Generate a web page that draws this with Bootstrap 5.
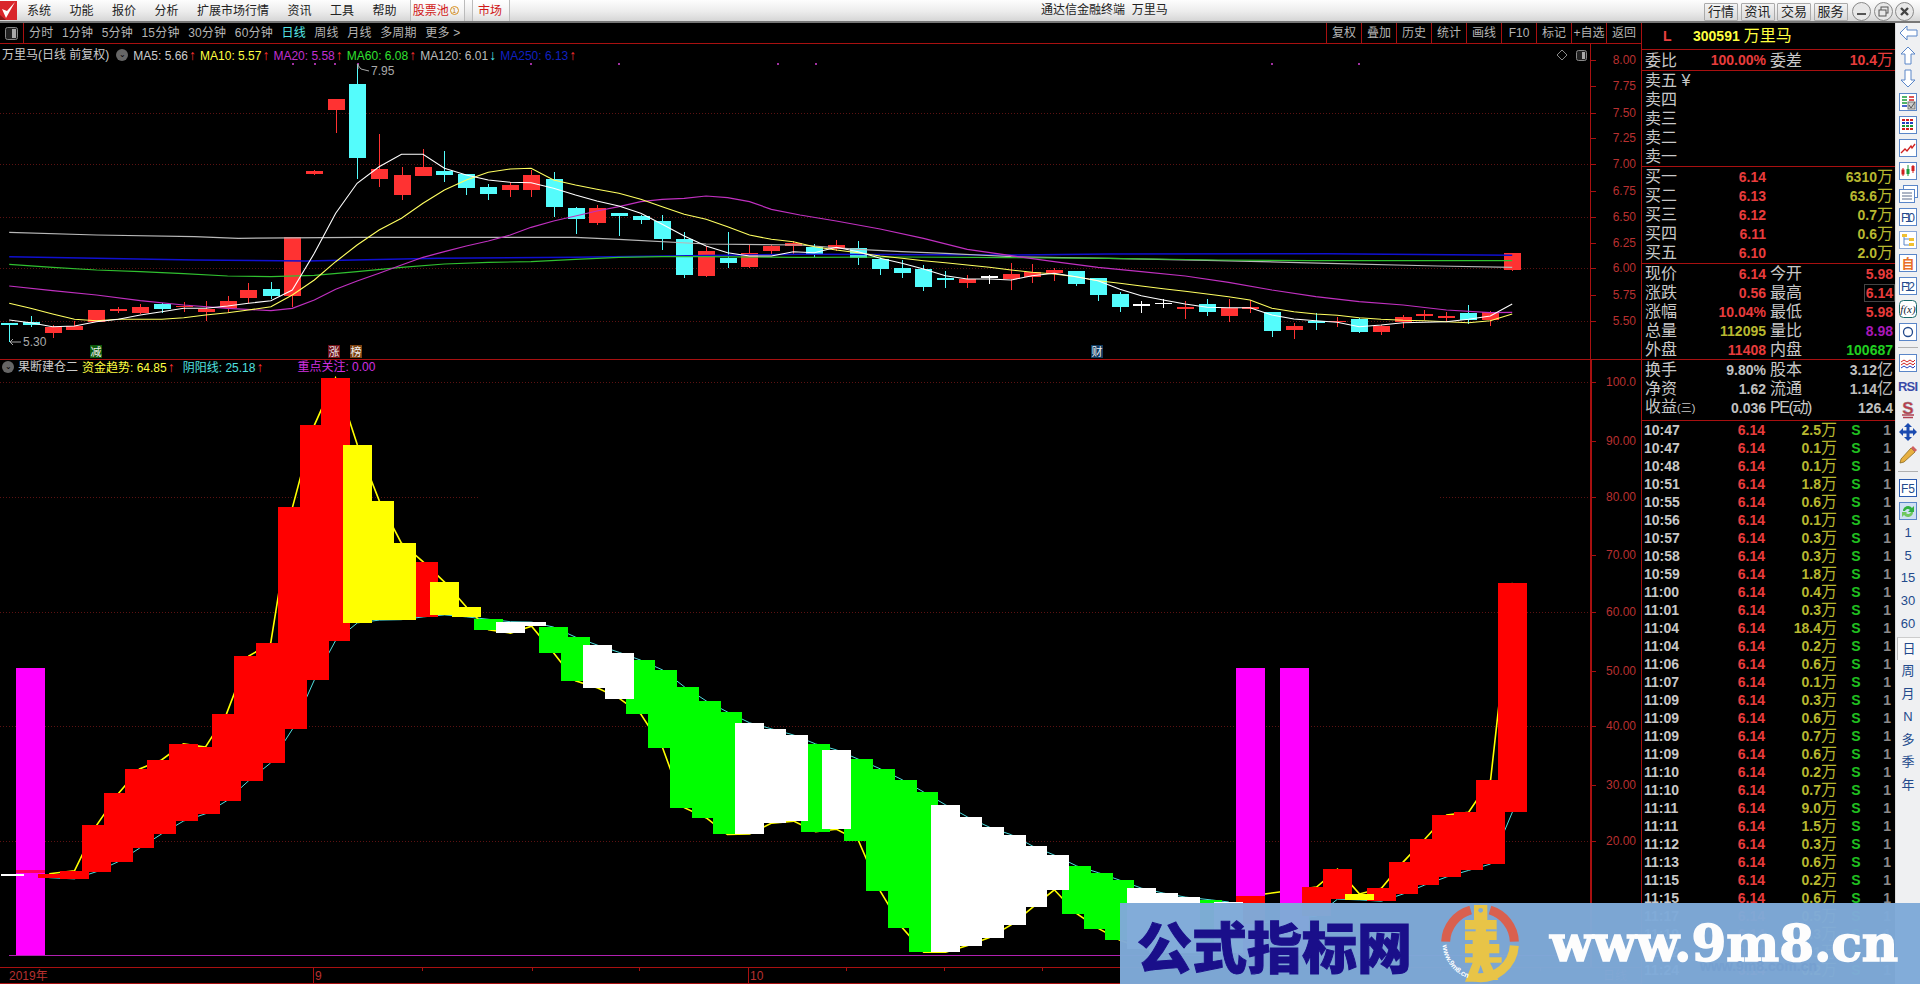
<!DOCTYPE html>
<html lang="zh-CN">
<head>
    <meta charset="UTF-8">
    <title>通达信金融终端 万里马</title>
    <link href="https://cdn.jsdelivr.net/npm/bootstrap@5.3.3/dist/css/bootstrap.min.css" rel="stylesheet">
    <script src="https://cdn.jsdelivr.net/npm/bootstrap@5.3.3/dist/js/bootstrap.bundle.min.js"></script>
    <style>
        body { width: 1920px; height: 984px; overflow: hidden; background: #000; color: #ccc;
               font-family: "Liberation Sans", "Noto Sans CJK SC", sans-serif; font-size: 12px; line-height: 1; }
        /* title bar */
        .topbar { height: 23px; background: linear-gradient(#fdfdfd, #ececec 55%, #d6d6d6); border-bottom: 2px solid #777; color: #222; position: relative; }
        .logo-box { width: 17px; height: 19px; }
        .menu-list { padding-left: 10px; gap: 18.5px; }
        .tab-red { height: 21px; color: #d01818; border-left: 1px solid #bbb; border-right: 1px solid #bbb; padding: 0 3px 0 2px; background: linear-gradient(#fff, #f2f2f2 60%, #ddd); }
        .tab-a { margin-left: 13px; width: 55px; gap: 1px; }
        .tab-b { margin-left: 7px; width: 38px; justify-content: center; }
        .dot-one { width: 9px; height: 9px; border: 1px solid #d89020; border-radius: 50%; color: #c07810; font-size: 7px; line-height: 7px; text-align: center; }
        .app-title { position: absolute; left: 1041px; top: 4px; width: 130px; white-space: nowrap; }
        .top-btns { position: absolute; right: 6px; top: 2px; gap: 2.5px; }
        .top-btn { width: 34px; height: 18px; padding: 0; font-size: 13px; line-height: 16px; border: 1px solid #aaa; border-radius: 1px; background: linear-gradient(#f4f4f4, #d8d8d8); color: #222; }
        .win-btn { width: 19px; height: 19px; }
        .win-btn:first-of-type { margin-left: 2px; }
        /* layout */
        .main-row { height: 961px; }
        .chart-col { width: 1642px; border-right: 1px solid #a81010; }
        .tool-row { height: 21px; border-bottom: 1px solid #a81010; color: #b4b4b4; }
        .tool-ico { width: 24px; height: 20px; border-right: 1px solid #a81010; }
        .tool-left { padding-left: 5px; gap: 8.5px; letter-spacing: .2px; }
        .tool-on { color: #55e8e8; }
        .tool-right { margin-left: auto; }
        .tool-right span { width: 35px; height: 20px; line-height: 20px; text-align: center; border-left: 1px solid #a81010; }
        .pane { position: relative; overflow: hidden; }
        .pane-top { height: 316px; }
        .pane-sub { height: 607px; }
        .pane-time { height: 17px; }
        .plot { position: absolute; left: 0; top: 0; }
        .legend { position: relative; z-index: 1; white-space: nowrap; font-size: 12px; }
        .legend-top { height: 22px; padding-left: 2px; }
        .legend-sub { height: 14px; padding-left: 2px; }
        .knob { width: 12px; height: 12px; border-radius: 50%; background: #666; color: #000; font-size: 8px; line-height: 11px; text-align: center; margin: 0 5px 0 7px; }
        .knob-s { margin: 0 4px 0 0; }
        .ma { margin-right: 4px; }
        .up { color: #ff3030; font-weight: 400; margin-left: 1px; font-size: 14px; line-height: 12px; width: 7px; display: inline-block; text-align: center; }
        .dn { color: #54e8f0; }
        /* quote panel */
        .pnl { width: 253px; font-family: "Liberation Sans", "Noto Sans CJK SC", sans-serif; overflow: hidden; }
        .pnl-hd { height: 27px; border-bottom: 1px solid #a81010; color: #ffff40; }
        .pnl-l { width: 51px; padding-left: 21px; color: #e84040; font-size: 14px; font-weight: 700; }
        .pnl-sec { border-bottom: 1px solid #a81010; }
        .sec-buy { padding-bottom: 1px; }
        .sec-base { padding-bottom: 3px; }
        .pnl-row { display: flex; height: 19px; align-items: center; padding-left: 3px; }
        .row-t { height: 20px; }
        .half { display: flex; justify-content: space-between; align-items: center; white-space: nowrap; }
        .half-a { width: 121px; }
        .half-b { width: 123px; margin-left: 4px; }
        .lb { font-size: 16px; line-height: 19px; color: #c8c8c8; }
        .lb-sm { font-size: 11px; }
        .lb-tight { letter-spacing: -1.4px; }
        .num { font-size: 14px; font-weight: 700; }
        .unit { font-size: 16px; font-weight: 400; }
        .c-red { color: #e83c3c; }
        .c-yel { color: #b8b830; }
        .c-gry { color: #c0c0c0; }
        .c-grn { color: #20d020; }
        .c-pur { color: #a818b8; }
        .hi-box { outline: 1px solid #444; outline-offset: 1px; }
        .tick-row { display: flex; height: 18px; align-items: center; padding-left: 2px; }
        .t-time { width: 50px; color: #c8c8c8; }
        .t-price { width: 71px; text-align: right; color: #e83c3c; }
        .t-vol { width: 72px; text-align: right; color: #b8b830; }
        .t-s { width: 38px; text-align: center; color: #20c020; }
        .t-n { width: 16px; text-align: right; color: #8c8c8c; }
        /* side bar */
        .side { width: 25px; background: #eff0f2; border-left: 1px solid #ddd; color: #234a8c; }
        .side-item { height: 23px; flex-shrink: 0; display: flex; align-items: center; justify-content: center; font-size: 13px; }
        .side-txt { height: 22.75px; }
        .side-first { margin-top: -2px; }
        .side-lift { margin-top: -1px; }
        .side-sep { height: 1px; background: #b0b0b0; margin: 4px 2px 3px; flex-shrink: 0; }
        .side-sep-b { margin: 5px 2px 4px; }
        .side-sel { background: #fafafa; border-left: 1px solid #bbb; border-top: 1px solid #ccc; margin: 2px 0 0 1px; }
        /* overlay banner */
        .banner { position: absolute; left: 1120px; top: 903px; right: 0; bottom: 0; background: rgba(127, 170, 216, .975); overflow: hidden; }
        .banner-name { font-family: "Noto Sans CJK SC", sans-serif; font-weight: 900; font-size: 55px; line-height: 70px; color: #1a0f8a; margin-left: 17px; -webkit-text-stroke: 1px #1a0f8a; white-space: nowrap; }
        .banner-url { font-family: "DejaVu Serif", serif; font-weight: 700; font-size: 50px; line-height: 62px; color: #fdfdfd; margin-left: 20px; -webkit-text-stroke: 1.5px #fdfdfd; white-space: nowrap; }
        .banner-ghost { position: absolute; left: 580px; top: 56px; font-size: 14px; font-weight: 700; color: #76a0d0; white-space: nowrap; }
    </style>
</head>
<body>
    <!-- 标题栏 -->
    <div class="topbar d-flex align-items-center">
        <svg class="logo-box flex-shrink-0" viewBox="0 0 17 19"><rect width="17" height="19" fill="#d9262b"/><path d="M2 8 L6 17 L15 1 L7 10 Z" fill="#fff"/><path d="M0 14 L6 19 L0 19 Z" fill="#8c1a1a"/></svg>
        <div class="menu-list d-flex align-items-center"><span>系统</span><span>功能</span><span>报价</span><span>分析</span><span>扩展市场行情</span><span>资讯</span><span>工具</span><span>帮助</span></div>
        <div class="tab-red tab-a d-flex align-items-center"><span>股票池</span><i class="dot-one fst-normal">1</i></div>
        <div class="tab-red tab-b d-flex align-items-center"><span>市场</span></div>
        <div class="app-title">通达信金融终端&nbsp; 万里马</div>
        <div class="top-btns d-flex align-items-center">
            <button class="btn top-btn" type="button">行情</button>
            <button class="btn top-btn" type="button">资讯</button>
            <button class="btn top-btn" type="button">交易</button>
            <button class="btn top-btn" type="button">服务</button>
            <svg class="win-btn" viewBox="0 0 19 19"><circle cx="9.5" cy="9.5" r="9" fill="#e8e8e8" stroke="#888"/><rect x="5" y="11" width="9" height="2" fill="#555"/></svg>
            <svg class="win-btn" viewBox="0 0 19 19"><circle cx="9.5" cy="9.5" r="9" fill="#e8e8e8" stroke="#888"/><rect x="7" y="5" width="7" height="6" fill="none" stroke="#555"/><rect x="5" y="8" width="7" height="6" fill="#e8e8e8" stroke="#555"/></svg>
            <svg class="win-btn" viewBox="0 0 19 19"><circle cx="9.5" cy="9.5" r="9" fill="#e8e8e8" stroke="#888"/><path d="M6 6 L13 13 M13 6 L6 13" stroke="#444" stroke-width="2.4"/></svg>
        </div>
    </div>

    <div class="main-row d-flex">
        <!-- 图表区 -->
        <div class="chart-col flex-shrink-0">
            <div class="tool-row d-flex align-items-center">
                <div class="tool-ico d-flex align-items-center justify-content-center flex-shrink-0">
                    <svg width="13" height="13" viewBox="0 0 13 13"><rect x=".5" y=".5" width="12" height="12" rx="2" fill="#222" stroke="#888"/><rect x="7" y="2" width="4" height="9" fill="#aaa"/></svg>
                </div>
                <div class="tool-left d-flex align-items-center">
                    <span>分时</span><span>1分钟</span><span>5分钟</span><span>15分钟</span><span>30分钟</span><span>60分钟</span><span class="tool-on">日线</span><span>周线</span><span>月线</span><span>多周期</span><span>更多 &gt;</span>
                </div>
                <div class="tool-right d-flex">
                    <span>复权</span><span>叠加</span><span>历史</span><span>统计</span><span>画线</span><span>F10</span><span>标记</span><span>+自选</span><span>返回</span>
                </div>
            </div>

            <div class="pane pane-top">
                <svg class="plot" id="plotTop" width="1641" height="316" viewBox="0 44 1641 316"></svg>
                <div class="legend legend-top d-flex align-items-center">
                    <span>万里马(日线 前复权)</span><span class="knob">&#8964;</span>
                    <span class="ma">MA5: 5.66<b class="up">↑</b></span>
                    <span class="ma" style="color:#ffff40">MA10: 5.57<b class="up">↑</b></span>
                    <span class="ma" style="color:#c030d0">MA20: 5.58<b class="up">↑</b></span>
                    <span class="ma" style="color:#30e030">MA60: 6.08<b class="up">↑</b></span>
                    <span class="ma" style="color:#bbb">MA120: 6.01<b class="up dn">↓</b></span>
                    <span class="ma" style="color:#1020c0">MA250: 6.13<b class="up">↑</b></span>
                </div>
            </div>

            <div class="pane pane-sub">
                <svg class="plot" id="plotSub" width="1641" height="607" viewBox="0 360 1641 607"></svg>
                <div class="legend legend-sub d-flex align-items-center">
                    <span class="knob knob-s">&#8964;</span><span class="me-1">果断建仓二</span>
                    <span style="color:#ffff40">资金趋势: 64.85<b class="up">↑</b></span>
                    <span class="ms-2" style="color:#50e0e0">阴阳线: 25.18<b class="up">↑</b></span>
                    <span style="color:#d030e0;margin-left:34px">重点关注: 0.00</span>
                </div>
            </div>

            <div class="pane pane-time">
                <svg class="plot" id="plotTime" width="1641" height="17" viewBox="0 967 1641 17"></svg>
            </div>
        </div>

        <!-- 报价面板 -->
        <div class="pnl flex-shrink-0">
            <div class="pnl-hd d-flex align-items-center">
                <span class="pnl-l">L</span><span class="num">300591</span><span class="unit ms-1">万里马</span>
            </div>
            <div class="pnl-sec">
                <div class="pnl-row row-t">
                    <div class="half half-a"><span class="lb">委比</span><span class="num c-red">100.00%</span></div>
                    <div class="half half-b"><span class="lb">委差</span><span class="num c-red">10.4<span class="unit">万</span></span></div>
                </div>
            </div>
            <div class="pnl-sec">
                <div class="pnl-row"><span class="lb">卖五 ¥</span></div>
                <div class="pnl-row"><span class="lb">卖四</span></div>
                <div class="pnl-row"><span class="lb">卖三</span></div>
                <div class="pnl-row"><span class="lb">卖二</span></div>
                <div class="pnl-row"><span class="lb">卖一</span></div>
            </div>
            <div class="pnl-sec sec-buy">
                <div class="pnl-row"><div class="half half-a"><span class="lb">买一</span><span class="num c-red">6.14</span></div><div class="half half-b justify-content-end"><span class="num c-yel">6310<span class="unit">万</span></span></div></div>
                <div class="pnl-row"><div class="half half-a"><span class="lb">买二</span><span class="num c-red">6.13</span></div><div class="half half-b justify-content-end"><span class="num c-yel">63.6<span class="unit">万</span></span></div></div>
                <div class="pnl-row"><div class="half half-a"><span class="lb">买三</span><span class="num c-red">6.12</span></div><div class="half half-b justify-content-end"><span class="num c-yel">0.7<span class="unit">万</span></span></div></div>
                <div class="pnl-row"><div class="half half-a"><span class="lb">买四</span><span class="num c-red">6.11</span></div><div class="half half-b justify-content-end"><span class="num c-yel">0.6<span class="unit">万</span></span></div></div>
                <div class="pnl-row"><div class="half half-a"><span class="lb">买五</span><span class="num c-red">6.10</span></div><div class="half half-b justify-content-end"><span class="num c-yel">2.0<span class="unit">万</span></span></div></div>
            </div>
            <div class="pnl-sec">
                <div class="pnl-row"><div class="half half-a"><span class="lb">现价</span><span class="num c-red">6.14</span></div><div class="half half-b"><span class="lb">今开</span><span class="num c-red">5.98</span></div></div>
                <div class="pnl-row"><div class="half half-a"><span class="lb">涨跌</span><span class="num c-red">0.56</span></div><div class="half half-b"><span class="lb">最高</span><span class="num c-red hi-box">6.14</span></div></div>
                <div class="pnl-row"><div class="half half-a"><span class="lb">涨幅</span><span class="num c-red">10.04%</span></div><div class="half half-b"><span class="lb">最低</span><span class="num c-red">5.98</span></div></div>
                <div class="pnl-row"><div class="half half-a"><span class="lb">总量</span><span class="num c-yel">112095</span></div><div class="half half-b"><span class="lb">量比</span><span class="num c-pur">8.98</span></div></div>
                <div class="pnl-row"><div class="half half-a"><span class="lb">外盘</span><span class="num c-red">11408</span></div><div class="half half-b"><span class="lb">内盘</span><span class="num c-grn">100687</span></div></div>
            </div>
            <div class="pnl-sec sec-base">
                <div class="pnl-row"><div class="half half-a"><span class="lb">换手</span><span class="num c-gry">9.80%</span></div><div class="half half-b"><span class="lb">股本</span><span class="num c-gry">3.12<span class="unit">亿</span></span></div></div>
                <div class="pnl-row"><div class="half half-a"><span class="lb">净资</span><span class="num c-gry">1.62</span></div><div class="half half-b"><span class="lb">流通</span><span class="num c-gry">1.14<span class="unit">亿</span></span></div></div>
                <div class="pnl-row"><div class="half half-a"><span class="lb">收益<span class="lb-sm">(三)</span></span><span class="num c-gry">0.036</span></div><div class="half half-b"><span class="lb lb-tight">PE(动)</span><span class="num c-gry">126.4</span></div></div>
            </div>
            <div id="ticks"></div>
        </div>

        <!-- 右侧工具条 -->
        <div class="side d-flex flex-column flex-shrink-0">
            <div class="side-item side-first"><svg width="19" height="16" viewBox="0 0 19 16"><path d="M1 8 L8 1 V5 H18 V11 H8 V15 Z" fill="#fff" stroke="#5a86c8"/></svg></div>
            <div class="side-item"><svg width="16" height="19" viewBox="0 0 16 19"><path d="M8 1 L15 8 H11 V18 H5 V8 H1 Z" fill="#fff" stroke="#5a86c8"/></svg></div>
            <div class="side-item"><svg width="16" height="19" viewBox="0 0 16 19"><path d="M8 18 L15 11 H11 V1 H5 V11 H1 Z" fill="#fff" stroke="#5a86c8"/></svg></div>
            <div class="side-item"><svg width="18" height="18" viewBox="0 0 18 18"><rect x=".5" y=".5" width="17" height="17" fill="#fff" stroke="#5a86c8"/><path d="M3 4 H8 M3 7 H8 M3 10 H8" stroke="#1a9a3a" stroke-width="1.6"/><path d="M10 4 H15 M10 7 H15" stroke="#d02020" stroke-width="1.6"/><path d="M3 13 H8" stroke="#2040c0" stroke-width="1.6"/><rect x="9" y="9" width="7" height="7" fill="#ccc" stroke="#777"/><path d="M10 12 L12 15 L16 9" stroke="#555" fill="none"/></svg></div>
            <div class="side-item"><svg width="18" height="18" viewBox="0 0 18 18"><rect x=".5" y=".5" width="17" height="17" fill="#fff" stroke="#5a86c8"/><path d="M3 4 H15" stroke="#d02020" stroke-width="2" stroke-dasharray="3 1"/><path d="M3 7 H15" stroke="#2040c0" stroke-width="2" stroke-dasharray="3 1"/><path d="M3 10 H15" stroke="#1a9a3a" stroke-width="2" stroke-dasharray="3 1"/><path d="M3 13 H15" stroke="#d02020" stroke-width="2" stroke-dasharray="3 1"/></svg></div>
            <div class="side-item"><svg width="18" height="18" viewBox="0 0 18 18"><rect x=".5" y=".5" width="17" height="17" fill="#fff" stroke="#5a86c8"/><path d="M2 14 L6 10 L8 12 L12 7 L13 9 L16 5" fill="none" stroke="#d02020" stroke-width="1.3"/></svg></div>
            <div class="side-item"><svg width="18" height="18" viewBox="0 0 18 18"><rect x=".5" y=".5" width="17" height="17" fill="#fff" stroke="#5a86c8"/><path d="M4 6 V14 M14 3 V11" stroke="#d02020"/><rect x="2.5" y="7.5" width="3" height="5" fill="#d02020"/><path d="M9 3 V14" stroke="#1a9a3a"/><rect x="7.5" y="7" width="3" height="5" fill="#1a9a3a"/><rect x="12.5" y="4" width="3" height="5" fill="#d02020"/></svg></div>
            <div class="side-item"><svg width="19" height="18" viewBox="0 0 19 18"><rect x="4.5" y=".5" width="14" height="12" fill="#fff" stroke="#5a86c8"/><rect x=".5" y="4.5" width="15" height="13" fill="#fff" stroke="#5a86c8"/><path d="M3 8 H13 M3 11 H13 M3 14 H13" stroke="#5a6a8a"/></svg></div>
            <div class="side-item"><svg width="18" height="18" viewBox="0 0 18 18"><rect x=".5" y=".5" width="17" height="17" fill="#fff" stroke="#5a86c8"/><text x="9" y="14" text-anchor="middle" font-size="12" fill="#234a8c" font-family="Liberation Sans" textLength="14">F10</text></svg></div>
            <div class="side-item"><svg width="18" height="18" viewBox="0 0 18 18"><rect x=".5" y=".5" width="17" height="17" fill="#fff" stroke="#8aa8d8"/><path d="M5 5 V14 H10 M5 8 H10" fill="none" stroke="#5a86c8"/><rect x="3" y="3" width="5" height="3" fill="#f0c030"/><rect x="10" y="7" width="5" height="3" fill="#f0c030"/><rect x="10" y="12" width="5" height="3" fill="#f0c030"/></svg></div>
            <div class="side-item"><svg width="18" height="18" viewBox="0 0 18 18"><rect x=".5" y=".5" width="17" height="17" fill="#fff" stroke="#5a86c8"/><text x="9" y="14" text-anchor="middle" font-size="13" font-weight="700" fill="#e87028" font-family="Noto Sans CJK SC">自</text></svg></div>
            <div class="side-item"><svg width="18" height="18" viewBox="0 0 18 18"><rect x=".5" y=".5" width="17" height="17" fill="#fff" stroke="#5a86c8"/><text x="9" y="14" text-anchor="middle" font-size="12" fill="#234a8c" font-family="Liberation Sans" textLength="14">F12</text></svg></div>
            <div class="side-item"><svg width="18" height="18" viewBox="0 0 18 18"><rect x=".5" y=".5" width="17" height="17" rx="4" fill="#fff" stroke="#1a6a6a"/><text x="9" y="13" text-anchor="middle" font-size="11" font-style="italic" fill="#123" font-family="Liberation Serif">f(x)</text></svg></div>
            <div class="side-item"><svg width="18" height="18" viewBox="0 0 18 18"><rect x=".5" y=".5" width="17" height="17" fill="#fff" stroke="#5a86c8"/><circle cx="9" cy="9" r="4.5" fill="none" stroke="#234a8c" stroke-width="1.3"/></svg></div>
            <div class="side-sep"></div>
            <div class="side-item"><svg width="18" height="18" viewBox="0 0 18 18"><rect x=".5" y=".5" width="17" height="17" fill="#fff" stroke="#5a86c8"/><path d="M2 8 L5 6 L8 8 L11 6 L14 8 L16 6" fill="none" stroke="#d02020"/><path d="M2 11 L5 9 L8 11 L11 9 L14 11 L16 9" fill="none" stroke="#d02020"/><path d="M2 14 L5 12 L8 14 L11 12 L14 14 L16 12" fill="none" stroke="#2040c0"/></svg></div>
            <div class="side-item"><svg width="22" height="14" viewBox="0 0 22 14"><text x="11" y="12" text-anchor="middle" font-size="13" font-weight="700" fill="#3a4aa8" font-family="Liberation Sans" textLength="20">RSI</text></svg></div>
            <div class="side-item"><svg width="16" height="20" viewBox="0 0 16 20"><text x="8" y="15" text-anchor="middle" font-size="17" font-weight="700" fill="#c03a4a" stroke="#888" stroke-width=".4" font-family="Liberation Sans">S</text><path d="M2 16 H14 M3 18.5 H13" stroke="#b04050" stroke-width="1.4"/></svg></div>
            <div class="side-item"><svg width="20" height="20" viewBox="0 0 20 20"><path d="M10 1 L14 5 H11.5 V8.5 H15 V6 L19 10 L15 14 V11.5 H11.5 V15 H14 L10 19 L6 15 H8.5 V11.5 H5 V14 L1 10 L5 6 V8.5 H8.5 V5 H6 Z" fill="#1a4ab0"/></svg></div>
            <div class="side-item"><svg width="20" height="20" viewBox="0 0 20 20"><path d="M3 14 L13 3 L17 7 L6 17 L2 18 Z" fill="#e8b040" stroke="#8a6a20" stroke-width=".8"/><path d="M13 3 L15 1 L19 5 L17 7 Z" fill="#d06060"/></svg></div>
            <div class="side-sep side-sep-b"></div>
            <div class="side-item"><svg width="18" height="18" viewBox="0 0 18 18"><rect x=".5" y=".5" width="17" height="17" fill="#fff" stroke="#2a5ab0"/><text x="9" y="14" text-anchor="middle" font-size="12" fill="#234a8c" font-family="Liberation Sans">F5</text></svg></div>
            <div class="side-item"><svg width="18" height="18" viewBox="0 0 18 18"><rect x=".5" y=".5" width="17" height="17" fill="#cfe0f4" stroke="#5a86c8"/><path d="M4 9 A5 5 0 0 1 13 6 L15 4 V10 H9 L11 8 A3 3 0 0 0 6 9 Z" fill="#30b040"/><path d="M14 10 A5 5 0 0 1 5 13 L3 15 V10 H8 L7 11 A3 3 0 0 0 12 10 Z" fill="#70c860"/></svg></div>
            <div class="side-item side-txt side-lift">1</div>
            <div class="side-item side-txt">5</div>
            <div class="side-item side-txt">15</div>
            <div class="side-item side-txt">30</div>
            <div class="side-item side-txt">60</div>
            <div class="side-item side-txt side-sel">日</div>
            <div class="side-item side-txt">周</div>
            <div class="side-item side-txt">月</div>
            <div class="side-item side-txt">N</div>
            <div class="side-item side-txt">多</div>
            <div class="side-item side-txt">季</div>
            <div class="side-item side-txt">年</div>
        </div>
    </div>

    <!-- 水印 -->
    <div class="banner d-flex align-items-center">
        <span class="banner-name">公式指标网</span>
        <svg class="flex-shrink-0" style="margin-left:18px" width="100" height="81" viewBox="0 9 300 243">
            <path d="M47 125 A103 103 0 0 1 122 30" fill="none" stroke="#d9604f" stroke-width="27"/>
            <path d="M180 30 A103 103 0 0 1 253 125" fill="none" stroke="#d9604f" stroke-width="27"/>
            <path d="M253 137 A103 103 0 0 1 135 232" fill="none" stroke="#e8c447" stroke-width="27"/>
            <path d="M132 15 H172 V60 H200 V120 H178 V132 H208 V160 H178 V172 H215 V188 H180 L205 240 H168 L152 195 L135 245 H105 L128 188 H105 V172 H128 V160 H105 V132 H128 V120 H105 V60 H132 Z" fill="#e8c447"/>
            <circle cx="152" cy="31" r="7" fill="#7fa9d8"/>
            <rect x="105" y="88" width="32" height="6" fill="#7fa9d8"/>
            <rect x="168" y="88" width="32" height="6" fill="#7fa9d8"/>
            <defs><path id="logoArc" d="M38 135 A112 112 0 0 0 128 238"/></defs>
            <text font-size="22" font-weight="700" fill="#fff" font-family="Liberation Sans"><textPath href="#logoArc">www.9m8.cn</textPath></text>
        </svg>
        <span class="banner-url">www.9m8.cn</span>
        <span class="banner-ghost">www.9m8.com.cn</span>
    </div>

    <script>
        // 盘口逐笔
        var tk = [['10:47','2.5'],['10:47','0.1'],['10:48','0.1'],['10:51','1.8'],['10:55','0.6'],['10:56','0.1'],['10:57','0.3'],['10:58','0.3'],['10:59','1.8'],['11:00','0.4'],['11:01','0.3'],['11:04','18.4'],['11:04','0.2'],['11:06','0.6'],['11:07','0.1'],['11:09','0.3'],['11:09','0.6'],['11:09','0.7'],['11:09','0.6'],['11:10','0.2'],['11:10','0.7'],['11:11','9.0'],['11:11','1.5'],['11:12','0.3'],['11:13','0.6'],['11:15','0.2'],['11:15','0.6'],['11:17','0.5'],['11:19','0.3'],['11:22','0.1'],['11:24','0.2']];
        document.getElementById('ticks').innerHTML = tk.map(function (r) {
            return '<div class="tick-row num"><span class="t-time">' + r[0] + '</span><span class="t-price">6.14</span><span class="t-vol">' + r[1] + '<span class="unit">万</span></span><span class="t-s">S</span><span class="t-n">1</span></div>';
        }).join('');

        var AX = '#a81010', LAB = '#b83030', GRID = '#5c1212';
        var X5 = function (p) { return p / 1.96; }, X6 = function (p) { return 800 + p / 1.96; }, YT = function (p) { return 130 + p / 3; };
        var YS = function (p) { return 350 + p / 2.473; };
        function poly(pts, col, w) { return '<polyline fill="none" stroke="' + col + '" stroke-width="' + w + '" points="' + pts.map(function (p) { return p[0].toFixed(1) + ',' + p[1].toFixed(1); }).join(' ') + '"/>'; }
        function rect(x, y, w, h, c) { return '<rect shape-rendering="crispEdges" x="' + x.toFixed(1) + '" y="' + y.toFixed(1) + '" width="' + w.toFixed(1) + '" height="' + h.toFixed(1) + '" fill="' + c + '"/>'; }
        function vline(x, a, b, c, w) { return '<line shape-rendering="crispEdges" x1="' + x + '" x2="' + x + '" y1="' + a + '" y2="' + b + '" stroke="' + c + '" stroke-width="' + (w || 1) + '"/>'; }
        function hline(a, b, y, c, d) { return '<line shape-rendering="crispEdges" x1="' + a + '" x2="' + b + '" y1="' + y + '" y2="' + y + '" stroke="' + c + '"' + (d ? ' stroke-dasharray="' + d + '"' : '') + '/>'; }
        function label(x, y, s, c, a, f) { return '<text x="' + x + '" y="' + y + '" fill="' + c + '" font-size="' + (f || 12) + '" text-anchor="' + (a || 'start') + '" font-family="Liberation Sans, Noto Sans CJK SC">' + s + '</text>'; }

        // K线: 中心x, 上影, 下影, 实体上, 实体下, 颜色 (r红 c青 w白)
        var k5 = [[18,580,635,580,583,'c'],[60,558,590,575,585,'c'],[103,585,625,590,608,'r'],[146,573,600,587,600,'r'],[189,540,575,540,575,'r'],[232,530,548,536,543,'r'],[275,522,552,532,550,'r'],[317,520,548,523,537,'c'],[360,515,545,527,530,'r'],[403,513,572,537,545,'r'],[446,498,545,513,535,'r'],[487,460,518,480,504,'r'],[531,456,506,477,498,'c'],[573,320,532,320,498,'r'],[616,120,134,123,131,'r'],[658,-93,10,-93,-60,'r'],[700,-198,146,-138,83,'c'],[743,12,172,118,147,'r'],[787,110,210,135,195,'r'],[829,57,138,111,138,'r'],[871,63,155,122,135,'c'],[914,132,195,132,173,'c'],[957,162,210,171,192,'c'],[1000,155,200,165,180,'r'],[1041,120,200,135,180,'r'],[1085,126,260,148,231,'c'],[1128,232,312,234,266,'c'],[1170,225,285,234,278,'r'],[1213,250,318,250,258,'c'],[1256,255,282,258,270,'c'],[1298,255,360,273,328,'c'],[1341,305,445,327,435,'c'],[1384,348,440,363,438,'r'],[1426,305,413,384,399,'c'],[1469,345,415,370,410,'r'],[1512,345,375,347,363,'r'],[1555,333,375,340,348,'r']];
        var k6 = [[28,343,382,350,372,'c'],[71,330,362,345,358,'r'],[114,333,405,355,385,'c'],[157,382,435,387,416,'c'],[200,390,445,414,428,'c'],[242,405,483,417,470,'c'],[285,423,473,445,448,'c'],[328,435,473,447,459,'r'],[371,435,462,438,441,'w'],[414,400,480,432,447,'r'],[455,402,458,425,440,'r'],[498,415,452,420,428,'r'],[541,423,467,423,461,'c'],[584,445,512,445,494,'c'],[627,487,545,492,530,'c'],[669,513,548,522,525,'w'],[712,507,533,518,522,'w'],[755,513,567,531,534,'r'],[798,507,557,522,545,'c'],[840,507,575,533,557,'r'],[882,510,548,531,534,'r'],[925,546,622,546,602,'c'],[968,580,626,588,600,'r'],[1011,548,600,574,577,'c'],[1053,560,590,572,575,'r'],[1096,565,608,568,605,'c'],[1139,585,614,587,605,'r'],[1182,556,594,562,577,'r'],[1224,540,570,553,556,'r'],[1267,545,573,558,561,'r'],[1310,525,583,549,570,'c'],[1353,543,587,545,570,'r'],[1396,369,422,369,419,'r']];
        var col = { r: '#ff3232', c: '#54fcfc', w: '#ffffff' };
        function candles(list, fx) {
            return list.map(function (k) {
                var x = Math.round(fx(k[0])), h = Math.max(1.5, (k[4] - k[3]) / 3);
                return vline(x + .5, YT(k[1]).toFixed(1), YT(k[2]).toFixed(1), col[k[5]]) + rect(x - 8, YT(k[3]), 17, h, col[k[5]]);
            }).join('');
        }
        function maLine(a, b) {
            return a.map(function (p) { return [X5(p[0]), YT(p[1])]; }).concat(b.map(function (p) { return [X6(p[0]), YT(p[1])]; }));
        }
        var ma5 = maLine([[18,570],[60,578],[103,590],[146,588],[189,575],[232,568],[275,555],[317,545],[360,535],[403,535],[446,528],[487,520],[531,512],[573,480],[616,370],[658,250],[700,160],[743,110],[787,73],[829,73],[871,115],[914,135],[957,150],[1000,157],[1041,158],[1085,175],[1128,195],[1170,213],[1213,228],[1256,250],[1298,283],[1341,318],[1384,348],[1426,368],[1469,378],[1512,378],[1555,365]],
            [[28,368],[71,352],[114,365],[157,385],[200,400],[242,417],[285,437],[328,447],[371,447],[414,450],[455,437],[498,430],[541,440],[584,452],[627,478],[669,497],[712,510],[755,522],[798,532],[840,533],[882,533],[925,555],[968,567],[1011,572],[1053,577],[1096,590],[1139,585],[1182,578],[1224,577],[1267,575],[1310,568],[1353,558],[1396,522]]);
        var ma10 = maLine([[18,520],[60,535],[103,552],[146,568],[189,572],[232,568],[275,568],[317,568],[360,563],[403,555],[446,548],[487,540],[531,530],[573,495],[616,450],[658,395],[700,345],[743,300],[787,265],[829,220],[871,180],[914,150],[957,127],[1000,117],[1041,115],[1085,150],[1128,165],[1170,178],[1213,190],[1256,208],[1298,230],[1341,253],[1384,268],[1426,290],[1469,315],[1512,328],[1555,335]],
            [[28,350],[71,360],[114,368],[157,378],[200,385],[242,392],[285,398],[328,405],[371,412],[414,420],[455,427],[498,432],[541,440],[584,452],[627,460],[669,468],[712,476],[755,484],[798,492],[840,500],[882,510],[925,535],[968,545],[1011,552],[1053,556],[1096,563],[1139,568],[1182,571],[1224,572],[1267,575],[1310,578],[1353,572],[1396,552]]);
        var ma20 = maLine([[18,468],[103,482],[189,495],[275,512],[360,525],[446,535],[531,542],[573,535],[616,510],[658,478],[700,453],[743,430],[787,405],[829,382],[871,365],[914,348],[957,333],[1000,315],[1041,292],[1085,273],[1128,258],[1170,243],[1213,230],[1256,215],[1298,208],[1341,205],[1384,198],[1426,203],[1469,215],[1512,238]],
            [[0,255],[71,273],[157,297],[242,325],[328,358],[414,377],[498,395],[584,412],[669,425],[755,438],[840,457],[925,480],[1011,500],[1096,515],[1182,525],[1267,540],[1353,548],[1396,547]]);
        var ma60 = maLine([[18,403],[103,412],[189,420],[275,425],[360,431],[446,438],[531,440],[616,436],[700,425],[787,412],[871,402],[957,397],[1041,395],[1128,388],[1213,382],[1298,380],[1384,380]],
            [[0,382],[200,381],[414,383],[605,385],[820,390],[1000,392],[1396,392]]);
        var ma120 = maLine([[18,307],[189,315],[381,320],[467,325],[700,322],[1128,322],[1213,328],[1384,342]],
            [[0,345],[114,358],[200,365],[285,370],[414,380],[605,385],[820,392],[1035,400],[1250,408],[1396,412]]);
        var ma250 = maLine([[18,380],[189,385],[381,390],[600,393],[860,385],[1128,382]],
            [[0,373],[414,375],[605,372],[1035,371],[1396,376]]);

        var s = '';
        [113, 164, 217, 268, 321].forEach(function (y) { s += hline(0, 1590, y + .5, GRID, '1 2'); });
        [292, 314, 334, 357, 530, 618, 1358, 777, 815, 1271].forEach(function (x) { s += rect(x, 63, 2, 2, '#a030a0'); });
        s += candles(k5, X5) + candles(k6, X6);
        s += poly(ma250, '#1010d0', 1.6) + poly(ma120, '#b8b8b8', 1.2) + poly(ma60, '#30c030', 1.2) + poly(ma20, '#c030c0', 1.2) + poly(ma10, '#ffff60', 1.1) + poly(ma5, '#ffffff', 1.1);
        // 最高最低标注
        s += poly([[357, 64], [361, 69], [369, 71]], '#aaa', 1) + poly([[358, 64], [358, 69]], '#aaa', 1) + label(371, 75, '7.95', '#aaa');
        s += poly([[10, 342], [21, 342]], '#aaa', 1) + poly([[13, 339], [10, 342], [13, 345]], '#aaa', 1) + label(23, 346, '5.30', '#aaa');
        // 信号字
        [[96, '减', '#0b5a0b'], [334, '涨', '#701018'], [356, '榜', '#7a4010'], [1097, '财', '#103a60']].forEach(function (m) {
            s += rect(m[0] - 6, 345, 12, 13, m[2]) + label(m[0], 356, m[1], '#eee', 'middle', 11);
        });
        // 右上角小按钮
        s += '<path d="M1562 50 L1567 55 L1562 60 L1557 55 Z" fill="none" stroke="#888"/><rect x="1576.5" y="50.5" width="10" height="10" rx="2" fill="#222" stroke="#888"/><rect x="1582" y="52" width="3" height="7" fill="#aaa"/>';
        // 价格轴
        s += vline(1590.5, 44, 360, AX);
        [['8.00', 60], ['7.75', 86], ['7.50', 113], ['7.25', 138], ['7.00', 164], ['6.75', 191], ['6.50', 217], ['6.25', 243], ['6.00', 268], ['5.75', 295], ['5.50', 321]].forEach(function (t) {
            s += hline(1590, 1596, t[1] + .5, AX) + label(1636, t[1] + 4, t[0], LAB, 'end');
        });
        s += hline(0, 1641, 359.5, AX);
        document.getElementById('plotTop').innerHTML = s;

        // 副图: x1,x2,y1,y2,颜色 (坐标取自参考图的两段裁剪)
        var b7 = [[75,118,1295,1305,'r'],[118,174,1288,1308,'r'],[161,218,1175,1290,'r'],[204,261,1096,1265,'r'],[245,302,1036,1232,'r'],[288,345,1014,1197,'r'],[331,388,974,1165,'r'],[374,431,982,1147,'r'],[416,472,900,1115,'r'],[459,516,757,1065,'r'],[502,559,725,1021,'r'],[545,602,388,937,'r'],[588,645,185,815,'r'],[629,686,69,719,'r'],[672,729,235,675,'y'],[715,772,373,668,'y'],[758,815,477,667,'y'],[801,858,524,660,'r'],[843,900,574,655,'y'],[886,943,636,660,'y'],[929,986,666,692,'g'],[972,1029,672,700,'w'],[1014,1070,673,683,'w'],[1056,1113,685,748,'g'],[1100,1156,710,818,'g'],[1143,1200,730,836,'w'],[1186,1243,748,862,'w'],[1227,1284,767,900,'g'],[1270,1327,791,983,'g'],[1313,1370,833,1132,'g'],[1356,1413,868,1157,'g'],[1397,1454,895,1198,'g'],[1441,1498,922,1197,'w'],[1484,1541,937,1170,'w'],[1527,1584,952,1165,'w']];
        var b8 = [[2,59,974,1191,'g'],[43,100,989,1185,'w'],[86,143,1012,1213,'g'],[129,186,1036,1339,'g'],[172,229,1063,1429,'g'],[214,271,1093,1489,'g'],[257,314,1125,1489,'w'],[300,357,1155,1473,'w'],[343,400,1180,1453,'w'],[386,443,1199,1421,'w'],[429,484,1227,1378,'w'],[470,527,1249,1335,'w'],[514,571,1276,1394,'g'],[557,614,1293,1431,'g'],[598,655,1311,1459,'g'],[641,698,1331,1480,'w'],[684,741,1343,1490,'w'],[727,784,1353,1490,'w'],[784,828,1360,1490,'g'],[812,869,1365,1490,'w'],[855,912,1350,1420,'r'],[984,1041,1328,1400,'r'],[1025,1082,1284,1358,'r'],[1068,1125,1345,1360,'y'],[1111,1168,1331,1363,'r'],[1154,1211,1266,1345,'r'],[1196,1253,1210,1323,'r'],[1239,1296,1150,1303,'r'],[1282,1339,1143,1287,'r'],[1325,1382,1063,1271,'r'],[1368,1425,576,1142,'r']];
        var bars = b7.map(function (b) { return [X5(b[0]), X5(b[1]), YS(b[2]), YS(b[3]), b[4]]; })
            .concat(b8.map(function (b) { return [X6(b[0]), X6(b[1]), YS(b[2]), YS(b[3]), b[4]]; }));
        var barCol = { r: '#ff0000', g: '#00ff00', y: '#ffff00', w: '#ffffff', m: '#ff00ff' };
        var t = '';
        [382, 497, 612, 726, 841].forEach(function (y) {
            if (y === 497) { t += hline(0, 478, y + .5, GRID, '1 2') + hline(1440, 1590, y + .5, GRID, '1 2'); }
            else { t += hline(0, 1590, y + .5, GRID, '1 2'); }
        });
        t += hline(9, 1590, 955.5, '#b020b0');
        // 趋势线在色块之下, 只露出拐角
        var yPts = [], cPts = [];
        bars.forEach(function (b) {
            var cx = (b[0] + b[1]) / 2, up = b[4] === 'r' || b[4] === 'y';
            yPts.push([cx, up ? b[2] : b[3]]);
            cPts.push([cx, up ? b[3] : b[2]]);
        });
        t += poly(cPts, '#50e0e0', 1) + poly(yPts, '#ffff00', 1.6);
        [[31, 88], [X6(855) * 1.96, X6(912) * 1.96], [X6(941) * 1.96, X6(998) * 1.96]].forEach(function (m) {
            t += rect(m[0] / 1.96, YS(786), (m[1] - m[0]) / 1.96, YS(1497) - YS(786), barCol.m);
        });
        t += rect(16, YS(1287), 29, 2.5, '#ff0060');
        ['r', 'g', 'y', 'w'].forEach(function (c) {
            bars.filter(function (b) { return b[4] === c; }).forEach(function (b) { t += rect(b[0], b[2], b[1] - b[0], b[3] - b[2], barCol[c]); });
        });
        t += rect(1, 874, 23, 2, '#ffffff');
        t += vline(1591, 360, 967, AX, 2);
        [['100.0', 382], ['90.00', 441], ['80.00', 497], ['70.00', 555], ['60.00', 612], ['50.00', 671], ['40.00', 726], ['30.00', 785], ['20.00', 841]].forEach(function (a) {
            t += hline(1590, 1596, a[1] + .5, AX) + label(1636, a[1] + 4, a[0], LAB, 'end');
        });
        document.getElementById('plotSub').innerHTML = t;

        // 时间轴
        var u = hline(0, 1641, 967.5, AX) + hline(0, 1641, 983.5, AX);
        [313, 422, 532, 639, 748, 846, 944, 1042, 1140, 1240, 1340, 1440, 1540].forEach(function (x) { u += vline(x + .5, 967, 971, AX); });
        u += vline(313.5, 967, 983, AX) + vline(748.5, 967, 983, AX);
        u += label(9, 980, '2019年', LAB) + label(315, 980, '9', LAB) + label(750, 980, '10', LAB) + label(1603, 980, '日线', LAB);
        document.getElementById('plotTime').innerHTML = u;
    </script>
</body>
</html>
